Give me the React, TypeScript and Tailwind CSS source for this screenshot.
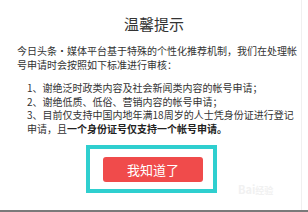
import React from "react";

export default function App() {
  const font = { fontFamily: '"Noto Sans CJK SC", "Noto Sans", sans-serif' };
  return (
    <div
      className="relative w-[308px] h-[212px] bg-white border-b-2 border-[#7a7a7a] overflow-hidden text-[#333]"
      style={font}
    >
      <div className="flex h-full">
        <div className="flex-1 flex flex-col border-r border-[#f0f0f0]">
          <div className="pt-[14px] text-center text-[15px] leading-[20px] text-[#333] pl-[7px]">温馨提示</div>
          <div className="mt-[10px] pl-[17px] text-[10px] leading-[13.6px] whitespace-nowrap">
            <div>今日头条•媒体平台基于特殊的个性化推荐机制，我们在处理帐</div>
            <div>号申请时会按照如下标准进行审核：</div>
          </div>
          <div className="mt-[10px] pl-[27px] text-[10px] leading-[13.6px] whitespace-nowrap">
            <div>1、谢绝泛时政类内容及社会新闻类内容的帐号申请；</div>
            <div>2、谢绝低质、低俗、营销内容的帐号申请；</div>
            <div>3、目前仅支持中国内地年满18周岁的人士凭身份证进行登记</div>
            <div>
              申请，且<span className="font-bold text-[#222]">一个身份证号仅支持一个帐号申请。</span>
            </div>
          </div>
          <div className="mt-[9px] ml-[86px] w-[131px] border-4 border-[#2fcfcf] pt-[8px] pb-[7px] pl-[13px]">
            <div className="w-[100px] h-[25px] rounded-[3px] bg-[#f04b4b] flex items-center justify-center text-white text-[13px] leading-none">
              我知道了
            </div>
          </div>
        </div>
        <div className="w-[6px]" />
      </div>
      <div className="absolute left-[238px] top-[184px] text-[11px] leading-none text-[#f1f1f1] font-bold">
        Bai<span className="text-[9px]">经验</span>
      </div>
    </div>
  );
}
